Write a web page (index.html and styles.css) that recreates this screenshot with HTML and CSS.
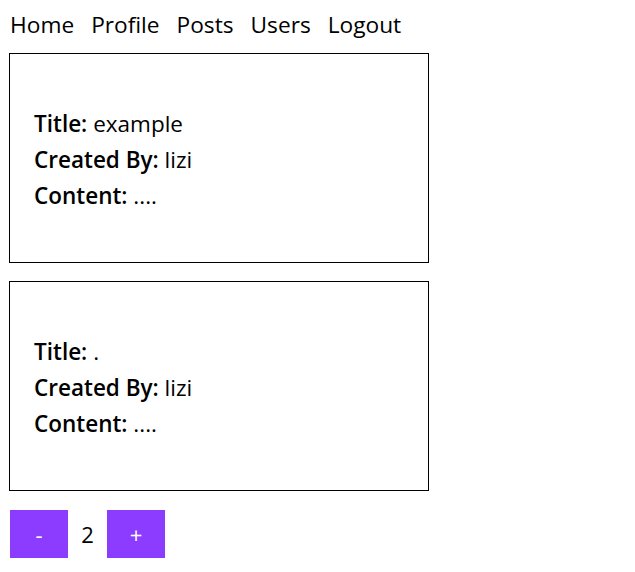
FILE: index.html
```html
<!DOCTYPE html>
<html>
<head>
<meta charset="utf-8">
<link rel="stylesheet" href="styles.css">
</head>
<body>
<nav class="nav">
  <a href="#">Home</a>
  <a href="#">Profile</a>
  <a href="#">Posts</a>
  <a href="#">Users</a>
  <a href="#">Logout</a>
</nav>
<main class="posts">
  <div class="card">
    <p><b>Title:</b> example</p>
    <p><b>Created By:</b> lizi</p>
    <p><b>Content:</b> ....</p>
  </div>
  <div class="card">
    <p><b>Title:</b> .</p>
    <p><b>Created By:</b> lizi</p>
    <p><b>Content:</b> ....</p>
  </div>
</main>
<div class="pager">
  <button class="btn">-</button>
  <span class="page">2</span>
  <button class="btn">+</button>
</div>
</body>
</html>
```
FILE: styles.css
```css
body {
  margin: 8px 0 0 9px;
  font-family: "Segoe UI", "Open Sans", "Noto Sans", sans-serif;
  color: #000;
  background: #fff;
}
.nav {
  display: flex;
  gap: 17px;
  font-size: 22.7px;
  line-height: 34px;
  padding-left: 1px;
}
.nav a {
  color: #000;
  text-decoration: none;
}
.posts {
  margin-top: 11px;
  display: flex;
  flex-direction: column;
  gap: 18px;
  width: 420px;
}
.card {
  border: 1px solid #000;
  padding: 52px 24px 0;
  box-sizing: border-box;
  height: 210px;
  font-size: 22.5px;
  line-height: 36px;
}
.card p { margin: 0; }
.card b { font-weight: 600; }
.pager {
  margin-top: 19px;
  display: flex;
  align-items: center;
  padding-left: 1px;
}
.btn {
  width: 58px;
  height: 48px;
  border: none;
  background: #8c3cff;
  color: #fff;
  font-family: inherit;
  font-size: 22px;
  padding: 0;
}
.page {
  width: 39px;
  text-align: center;
  font-size: 22px;
}
```
